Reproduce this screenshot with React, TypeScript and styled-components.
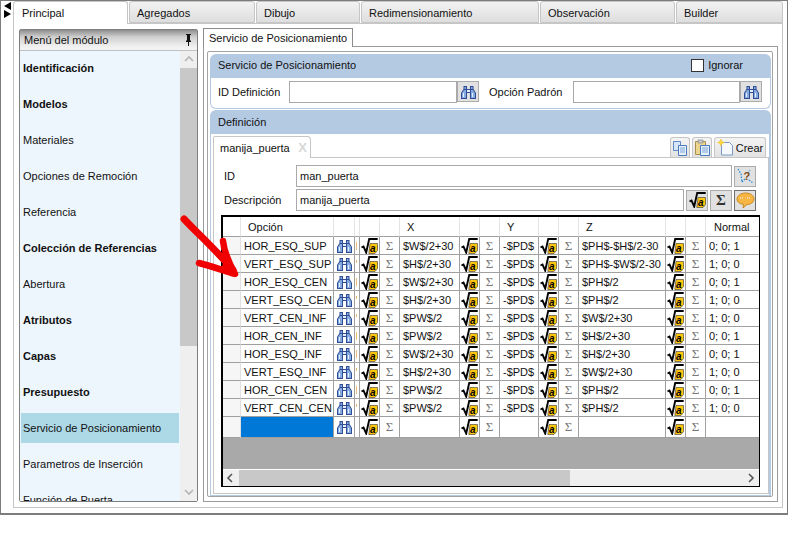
import React from 'react'
import styled, { createGlobalStyle } from 'styled-components'

const GlobalStyle = createGlobalStyle`
  html, body {
    margin: 0;
    padding: 0;
    background: #fff;
  }
  body {
    font-family: "Liberation Sans", Arial, sans-serif;
    font-size: 11px;
    color: #111;
  }
  * {
    box-sizing: border-box;
  }
`

const Stage = styled.div`
  position: relative;
  width: 801px;
  height: 541px;
  overflow: hidden;
`

const Win = styled.div`
  display: flex;
  width: 788px;
  height: 515px;
  padding: 0 4px 5px 0;
  border: 1px solid #7c7c7c;
  border-width: 1px 1px 2px 1px;
`

const SideStrip = styled.div`
  display: flex;
  flex-direction: column;
  align-items: center;
  width: 12px;
  padding-top: 1px;
`

const Triangle = styled.div<{ $dir: 'left' | 'right' }>`
  width: 0;
  height: 0;
  border-top: 4px solid transparent;
  border-bottom: 4px solid transparent;
  ${p => (p.$dir === 'left' ? 'border-right: 7px solid #000;' : 'border-left: 7px solid #000;')}
`

const MainTabs = styled.div`
  flex: 1;
  display: flex;
  flex-direction: column;
  min-width: 0;
`

const TabStrip = styled.div`
  display: flex;
  gap: 1px;
  height: 22px;
`

const TopTab = styled.div<{ $w: number; $active?: boolean }>`
  width: ${p => p.$w}px;
  height: ${p => (p.$active ? 23 : 22)}px;
  padding: 5px 0 0 ${p => (p.$active ? 8 : 7)}px;
  border: 1px solid #c6c6c6;
  border-bottom: ${p => (p.$active ? 'none' : '1px solid #c6c6c6')};
  border-radius: 3px 3px 0 0;
  background: ${p => (p.$active ? '#fff' : 'linear-gradient(#f2f2f2, #dedede)')};
  position: relative;
  z-index: ${p => (p.$active ? 1 : 0)};
`

const TabPage = styled.div`
  flex: 1;
  display: flex;
  gap: 5px;
  padding: 5px;
  border: 1px solid #c6c6c6;
  min-height: 0;
`

const MenuPanel = styled.div`
  display: flex;
  flex-direction: column;
  width: 179px;
  flex: none;
  border: 1px solid #7f7f7f;
  border-radius: 2px;
`

const MenuHeader = styled.div`
  display: flex;
  align-items: center;
  justify-content: space-between;
  height: 21px;
  flex: none;
  padding: 0 4px;
  background: linear-gradient(#8e8e8e, #cfcfcf 35%, #efefef 80%, #f4f4f4);
  border-bottom: 1px solid #c0c0c0;
`

const MenuBody = styled.div`
  flex: 1;
  display: flex;
  min-height: 0;
`

const MenuList = styled.div`
  flex: 1;
  overflow: hidden;
  padding: 0 1px;
  background: #eef6fd;
`

const MenuItem = styled.div<{ $bold?: boolean; $selected?: boolean }>`
  display: flex;
  align-items: center;
  height: 30px;
  margin-bottom: 6px;
  padding-left: 2px;
  font-weight: ${p => (p.$bold ? 700 : 400)};
  background: ${p => (p.$selected ? '#add8e6' : 'transparent')};
  &:first-child {
    margin-top: 2px;
  }
`

const VScroll = styled.div`
  display: flex;
  flex-direction: column;
  width: 17px;
  flex: none;
  background: #efefef;
`

const ScrollEnd = styled.div`
  display: flex;
  align-items: center;
  justify-content: center;
  height: 17px;
  flex: none;
`

const VThumb = styled.div`
  height: 278px;
  flex: none;
  background: #c8c8c8;
`

const Spacer = styled.div`
  flex: 1;
`

const RightPane = styled.div`
  flex: 1;
  display: flex;
  flex-direction: column;
  min-width: 0;
  margin-top: -1px;
`

const PageTabRow = styled.div`
  height: 18px;
  flex: none;
  display: flex;
`

const PageTab = styled.div`
  width: 150px;
  height: 19px;
  padding: 3px 0 0 5px;
  border: 1px solid #8c8c8c;
  border-bottom: none;
  background: #fff;
  position: relative;
  z-index: 1;
`

const PagePanel = styled.div`
  flex: 1;
  width: 575px;
  padding: 4px 4px 4px 3px;
  border: 1px solid #9a9a9a;
  display: flex;
  min-height: 0;
`

const GroupFrame = styled.div`
  flex: 1;
  display: flex;
  flex-direction: column;
  padding: 2px 1px 0 2px;
  border: 1.5px solid #a2a2a2;
  border-radius: 2px;
  min-width: 0;
`

const SectionHead = styled.div<{ $lift?: number }>`
  display: flex;
  align-items: center;
  justify-content: space-between;
  height: 24px;
  flex: none;
  padding: 0 28px ${p => p.$lift ?? 0}px 8px;
  background: #b4cae3;
  border-radius: 6px 6px 0 0;
`

const CheckLabel = styled.label`
  display: flex;
  align-items: center;
  gap: 4px;
`

const CheckBox = styled.span`
  width: 13px;
  height: 13px;
  background: #fff;
  border: 1px solid #333;
`

const DefinitionRow = styled.div`
  display: flex;
  align-items: center;
  height: 31px;
  flex: none;
  padding: 0 0 3px 7px;
  border: 1px solid #b4cae3;
  border-top: none;
  border-radius: 0 0 6px 6px;
  margin-bottom: 1px;
`

const FieldLabel = styled.span<{ $w: number; $pad?: number }>`
  width: ${p => p.$w}px;
  padding-left: ${p => p.$pad ?? 0}px;
  flex: none;
`

const TextField = styled.div<{ $w: number }>`
  display: flex;
  align-items: center;
  width: ${p => p.$w}px;
  height: 22px;
  flex: none;
  padding-left: 3px;
  background: #fff;
  border: 1px solid #a9a9a9;
`

const IconButton = styled.button<{ $w?: number; $pressed?: boolean }>`
  display: flex;
  align-items: center;
  justify-content: center;
  width: ${p => p.$w ?? 22}px;
  height: 21px;
  flex: none;
  padding: 0;
  background: #e1e1e1;
  border: 1px solid ${p => (p.$pressed ? '#6f6f6f' : '#ababab')};
`

const Definition = styled.div`
  flex: 1;
  display: flex;
  flex-direction: column;
  min-height: 0;
  border: solid #b4cae3;
  border-width: 0 2px 1px 1px;
`

const DocTabs = styled.div`
  display: flex;
  justify-content: space-between;
  height: 23px;
  flex: none;
  padding: 2px 2px 0 2px;
`

const DocTab = styled.div`
  display: flex;
  align-items: center;
  justify-content: space-between;
  width: 98px;
  height: 22px;
  padding: 0 3px 0 6px;
  background: #fff;
  border: 1px solid #c6c6c6;
  border-bottom: none;
  border-radius: 2px 4px 0 0;
  position: relative;
  z-index: 1;
`

const CloseMark = styled.span`
  color: #d8d8d8;
  font-size: 13px;
  font-weight: 700;
`

const DocTools = styled.div`
  display: flex;
  gap: 2px;
  align-items: flex-end;
  padding-right: 1px;
`

const ToolTab = styled.button<{ $w: number }>`
  display: flex;
  align-items: center;
  justify-content: center;
  gap: 2px;
  width: ${p => p.$w}px;
  height: 20px;
  padding: 0;
  background: linear-gradient(#f4f4f4, #e2e2e2);
  border: 1px solid #c6c6c6;
  border-bottom: none;
  border-radius: 3px 3px 0 0;
  font: inherit;
  color: #111;
`

const DocPage = styled.div`
  flex: 1;
  display: flex;
  flex-direction: column;
  margin: 0 0 1px 2px;
  padding: 7px 8px 6px 7px;
  border: 1px solid #c6c6c6;
  min-height: 0;
`

const FormRow = styled.div`
  display: flex;
  align-items: center;
  gap: 2px;
  height: 22px;
  flex: none;
  margin-bottom: 2px;
`

const FormLabel = styled.span`
  width: 75px;
  padding-left: 3px;
  margin-right: -2px;
  flex: none;
`

const Table = styled.div`
  flex: 1;
  display: flex;
  flex-direction: column;
  margin-top: 2px;
  border: 2px solid #000;
  border-bottom-width: 1px;
  border-right-width: 1px;
  background: #a9a9a9;
  overflow: hidden;
  min-height: 0;
`

const COLUMNS = '18px 93px 21px 5px 20px 20px 60px 20px 20px 39px 20px 20px 87px 20px 20px 60px'

const GridRow = styled.div<{ $h: number }>`
  display: grid;
  grid-template-columns: ${COLUMNS};
  height: ${p => p.$h}px;
  flex: none;
  background: #fff;
`

const HeadCell = styled.div<{ $pad?: number }>`
  display: flex;
  align-items: center;
  padding-left: ${p => p.$pad ?? 0}px;
  border-right: 1px solid #e3e3e3;
  border-bottom: 1px solid #a0a0a0;
  white-space: nowrap;
`

const Cell = styled.div<{ $selected?: boolean; $center?: boolean; $pad?: number }>`
  display: flex;
  align-items: center;
  justify-content: ${p => (p.$center ? 'center' : 'flex-start')};
  padding-left: ${p => p.$pad ?? 0}px;
  border-right: 1px solid #a0a0a0;
  border-bottom: 1px solid #a0a0a0;
  overflow: hidden;
  white-space: nowrap;
  background: ${p => (p.$selected ? '#0078d7' : '#fff')};
`

const RowHeader = styled(Cell)`
  background: #f6f6f6;
  border-color: #e0e0e0;
  border-bottom-color: #a0a0a0;
`

const ClippedStem = styled.span<{ $short?: boolean }>`
  width: 1px;
  height: ${p => (p.$short ? 3 : 8)}px;
  margin: ${p => (p.$short ? '0 0 5px 1px' : '0 0 0 1px')};
  background: #eebb77;
`

const SigmaText = styled.span<{ $dark?: boolean }>`
  font-family: "Liberation Serif", serif;
  font-size: ${p => (p.$dark ? 15 : 13)}px;
  font-weight: ${p => (p.$dark ? 700 : 400)};
  color: ${p => (p.$dark ? '#333' : '#777')};
`

const GreyArea = styled.div`
  flex: 1;
`

const HScroll = styled.div`
  display: flex;
  height: 17px;
  flex: none;
  border-top: 1px solid #fff;
  background: #efefef;
`

const HEnd = styled.div`
  display: flex;
  align-items: center;
  justify-content: center;
  width: 16px;
  flex: none;
`

const HThumb = styled.div`
  width: 331px;
  flex: none;
  background: #c8c8c8;
`

const ArrowOverlay = styled.svg`
  position: absolute;
  left: 178px;
  top: 212px;
  pointer-events: none;
`

const Binoculars = () => (
  <svg width="15" height="14" viewBox="0 0 15 14">
    <path d="M2.500 1h3.500v3h3V1h3.500v3L15 8v6H9V8H6v6H0V8l2.500-4z" fill="#2f4c94" />
    <path d="M3.500 2h1.500v2H3.500zM10 2h1.500v2H10zM3 5h2v8H1V8zM10 5h2l2 3v5h-4z" fill="#86abe0" />
    <path d="M2 8h1v4H2zM11 8h1v4h-1zM6 5h3v2H6z" fill="#e6f0fc" />
  </svg>
)

const SqrtIcon = () => (
  <svg width="17" height="16" viewBox="0 0 17 16">
    <path d="M0.500 9.500l2-1 2.700 6L8.200 1h8.500" fill="none" stroke="#000" strokeWidth="1.900" />
    <path d="M9 5.500h7.500v7l-2.500 3H7.800z" fill="#ffc60b" stroke="#333" strokeWidth="0.600" />
    <text x="9" y="13.500" fontFamily="Liberation Sans" fontWeight="700" fontStyle="italic" fontSize="10" fill="#000">a</text>
  </svg>
)

const PinIcon = () => (
  <svg width="9" height="12" viewBox="0 0 9 12">
    <path d="M2 0h5v1H6v5l1 1v1H5v4H4V8H2V7l1-1V1H2z" fill="#111" />
  </svg>
)

const Chevron = ({ dir, color = '#b5b5b5' }: { dir: 'up' | 'down' | 'left' | 'right'; color?: string }) => {
  const points = {
    up: '1,6 5,2 9,6',
    down: '1,2 5,6 9,2',
    left: '6,1 2,5 6,9',
    right: '3,1 7,5 3,9',
  }[dir]
  return (
    <svg width="10" height="10" viewBox="0 0 10 10">
      <polyline points={points} fill="none" stroke={color} strokeWidth="1.600" />
    </svg>
  )
}

const CurveHelp = () => (
  <svg width="18" height="18" viewBox="0 0 18 18">
    <path d="M2 2l3 5 1 8M6 15l3-3M12 6l2-3M13 13l4 3" fill="none" stroke="#1d86d8" strokeWidth="1.200" strokeDasharray="1.500 1.300" />
    <text x="7.500" y="13" fontFamily="Liberation Sans" fontWeight="700" fontSize="11" fill="#7a4a10">?</text>
  </svg>
)

const SpeechIcon = () => (
  <svg width="19" height="17" viewBox="0 0 19 17">
    <path d="M9.500 1C14.500 1 18 3.500 18 7s-3.500 5.500-7 5.500L7 16l.5-3.700C3.500 12 1 10 1 7s3.500-6 8.500-6z" fill="#f7b544" stroke="#c88a20" />
    <path d="M4 6h3M11 6h3" stroke="#fff" strokeWidth="1.200" strokeDasharray="1 1" />
  </svg>
)

const CopyIcon = () => (
  <svg width="16" height="16" viewBox="0 0 16 16">
    <path d="M1.500 1.500h7v9h-7z" fill="#d6e6f8" stroke="#5f88c4" />
    <path d="M6.500 5.500h8v10h-8z" fill="#e6f0fb" stroke="#4c79bc" />
    <path d="M8 8h5M8 10h5M8 12h5" stroke="#7fa5d8" />
  </svg>
)

const PasteIcon = () => (
  <svg width="16" height="17" viewBox="0 0 16 17">
    <path d="M1.500 2.500h10v13h-10z" fill="#ecd58f" stroke="#a88d4c" />
    <path d="M4 1h5v3H4z" fill="#c9c9c9" stroke="#8a8a8a" strokeWidth="0.700" />
    <path d="M6.500 6.500h9v10h-9z" fill="#e6f0fb" stroke="#4c79bc" />
    <path d="M8 9h6M8 11h6M8 13h6" stroke="#7fa5d8" />
  </svg>
)

const NewDocIcon = () => (
  <svg width="17" height="17" viewBox="0 0 17 17">
    <path d="M4.500 3.500h8l3 3v9.500h-11z" fill="#f5f9fe" stroke="#7b99c4" />
    <path d="M4 0l1 2.500L7.500 3.500 5 4.500 4 7 3 4.500 0.500 3.500 3 2.500z" fill="#ffd83a" stroke="#e8b010" strokeWidth="0.400" />
  </svg>
)

const mainTabs = [
  { label: 'Principal', w: 115, active: true },
  { label: 'Agregados', w: 126 },
  { label: 'Dibujo', w: 104 },
  { label: 'Redimensionamiento', w: 178 },
  { label: 'Observación', w: 135 },
  { label: 'Builder', w: 107 },
]

const menuItems = [
  { label: 'Identificación', bold: true },
  { label: 'Modelos', bold: true },
  { label: 'Materiales' },
  { label: 'Opciones de Remoción' },
  { label: 'Referencia' },
  { label: 'Colección de Referencias', bold: true },
  { label: 'Abertura' },
  { label: 'Atributos', bold: true },
  { label: 'Capas', bold: true },
  { label: 'Presupuesto', bold: true },
  { label: 'Servicio de Posicionamiento', selected: true },
  { label: 'Parametros de Inserción' },
  { label: 'Función de Puerta' },
]

const rows = [
  ['HOR_ESQ_SUP', '$W$/2+30', '-$PD$', '$PH$-$H$/2-30', '0; 0; 1'],
  ['VERT_ESQ_SUP', '$H$/2+30', '-$PD$', '$PH$-$W$/2-30', '1; 0; 0'],
  ['HOR_ESQ_CEN', '$W$/2+30', '-$PD$', '$PH$/2', '0; 0; 1'],
  ['VERT_ESQ_CEN', '$H$/2+30', '-$PD$', '$PH$/2', '1; 0; 0'],
  ['VERT_CEN_INF', '$PW$/2', '-$PD$', '$W$/2+30', '1; 0; 0'],
  ['HOR_CEN_INF', '$PW$/2', '-$PD$', '$H$/2+30', '0; 0; 1'],
  ['HOR_ESQ_INF', '$W$/2+30', '-$PD$', '$H$/2+30', '0; 0; 1'],
  ['VERT_ESQ_INF', '$H$/2+30', '-$PD$', '$W$/2+30', '1; 0; 0'],
  ['HOR_CEN_CEN', '$PW$/2', '-$PD$', '$PH$/2', '0; 0; 1'],
  ['VERT_CEN_CEN', '$PW$/2', '-$PD$', '$PH$/2', '1; 0; 0'],
]

const DataRow = ({ values, height, selected }: { values: string[]; height: number; selected?: boolean }) => (
  <GridRow $h={height}>
    <RowHeader />
    <Cell $pad={3} $selected={selected}>{values[0]}</Cell>
    <Cell $center><Binoculars /></Cell>
    <Cell>{values[0] && <ClippedStem $short={values[0].startsWith('V')} />}</Cell>
    <Cell $center><SqrtIcon /></Cell>
    <Cell $center><SigmaText>Σ</SigmaText></Cell>
    <Cell $pad={3}>{values[1]}</Cell>
    <Cell $center><SqrtIcon /></Cell>
    <Cell $center><SigmaText>Σ</SigmaText></Cell>
    <Cell $pad={3}>{values[2]}</Cell>
    <Cell $center><SqrtIcon /></Cell>
    <Cell $center><SigmaText>Σ</SigmaText></Cell>
    <Cell $pad={3}>{values[3]}</Cell>
    <Cell $center><SqrtIcon /></Cell>
    <Cell $center><SigmaText>Σ</SigmaText></Cell>
    <Cell $pad={3}>{values[4]}</Cell>
  </GridRow>
)

const App: React.FC = () => {
  return (
    <Stage>
      <GlobalStyle />
      <Win>
        <SideStrip>
          <Triangle $dir="left" />
          <Triangle $dir="right" />
        </SideStrip>
        <MainTabs>
          <TabStrip>
            {mainTabs.map(t => (
              <TopTab key={t.label} $w={t.w} $active={t.active}>{t.label}</TopTab>
            ))}
          </TabStrip>
          <TabPage>
            <MenuPanel>
              <MenuHeader>
                <span>Menú del módulo</span>
                <PinIcon />
              </MenuHeader>
              <MenuBody>
                <MenuList>
                  {menuItems.map(m => (
                    <MenuItem key={m.label} $bold={m.bold} $selected={m.selected}>{m.label}</MenuItem>
                  ))}
                </MenuList>
                <VScroll>
                  <ScrollEnd><Chevron dir="up" /></ScrollEnd>
                  <VThumb />
                  <Spacer />
                  <ScrollEnd><Chevron dir="down" /></ScrollEnd>
                </VScroll>
              </MenuBody>
            </MenuPanel>
            <RightPane>
              <PageTabRow>
                <PageTab>Servicio de Posicionamiento</PageTab>
              </PageTabRow>
              <PagePanel>
                <GroupFrame>
                  <SectionHead $lift={2}>
                    <span>Servicio de Posicionamiento</span>
                    <CheckLabel><CheckBox />Ignorar</CheckLabel>
                  </SectionHead>
                  <DefinitionRow>
                    <FieldLabel $w={71}>ID Definición</FieldLabel>
                    <TextField $w={168} />
                    <IconButton><Binoculars /></IconButton>
                    <FieldLabel $w={94} $pad={10}>Opción Padrón</FieldLabel>
                    <TextField $w={167} />
                    <IconButton><Binoculars /></IconButton>
                  </DefinitionRow>
                  <SectionHead>
                    <span>Definición</span>
                  </SectionHead>
                  <Definition>
                    <DocTabs>
                      <DocTab>
                        <span>manija_puerta</span>
                        <CloseMark>X</CloseMark>
                      </DocTab>
                      <DocTools>
                        <ToolTab $w={20}><CopyIcon /></ToolTab>
                        <ToolTab $w={20}><PasteIcon /></ToolTab>
                        <ToolTab $w={52}><NewDocIcon />Crear</ToolTab>
                      </DocTools>
                    </DocTabs>
                    <DocPage>
                      <FormRow>
                        <FormLabel>ID</FormLabel>
                        <TextField $w={436}>man_puerta</TextField>
                        <IconButton><CurveHelp /></IconButton>
                      </FormRow>
                      <FormRow>
                        <FormLabel>Descripción</FormLabel>
                        <TextField $w={388}>manija_puerta</TextField>
                        <IconButton><SqrtIcon /></IconButton>
                        <IconButton><SigmaText $dark>Σ</SigmaText></IconButton>
                        <IconButton $pressed><SpeechIcon /></IconButton>
                      </FormRow>
                      <Table>
                        <GridRow $h={20}>
                          <HeadCell />
                          <HeadCell $pad={7}>Opción</HeadCell>
                          <HeadCell />
                          <HeadCell />
                          <HeadCell />
                          <HeadCell />
                          <HeadCell $pad={7}>X</HeadCell>
                          <HeadCell />
                          <HeadCell />
                          <HeadCell $pad={7}>Y</HeadCell>
                          <HeadCell />
                          <HeadCell />
                          <HeadCell $pad={7}>Z</HeadCell>
                          <HeadCell />
                          <HeadCell />
                          <HeadCell $pad={8}>Normal</HeadCell>
                        </GridRow>
                        {rows.map(r => (
                          <DataRow key={r[0]} values={r} height={18} />
                        ))}
                        <DataRow values={['', '', '', '', '']} height={21} selected />
                        <GreyArea />
                        <HScroll>
                          <HEnd><Chevron dir="left" color="#555" /></HEnd>
                          <HThumb />
                          <Spacer />
                          <HEnd><Chevron dir="right" color="#555" /></HEnd>
                        </HScroll>
                      </Table>
                    </DocPage>
                  </Definition>
                </GroupFrame>
              </PagePanel>
            </RightPane>
          </TabPage>
        </MainTabs>
      </Win>
      <ArrowOverlay width="70" height="70" viewBox="0 0 70 70">
        <path d="M6 7C20 22 38 38 55 58" fill="none" stroke="#f00000" strokeWidth="7" strokeLinecap="round" />
        <path d="M45 29c1 10 5 20 12 33C44 58 33 54 21 51" fill="none" stroke="#f00000" strokeWidth="6.500" strokeLinecap="round" strokeLinejoin="round" />
        <path d="M47 48l9 12-13-4z" fill="#f00000" />
      </ArrowOverlay>
    </Stage>
  )
}

export default App
